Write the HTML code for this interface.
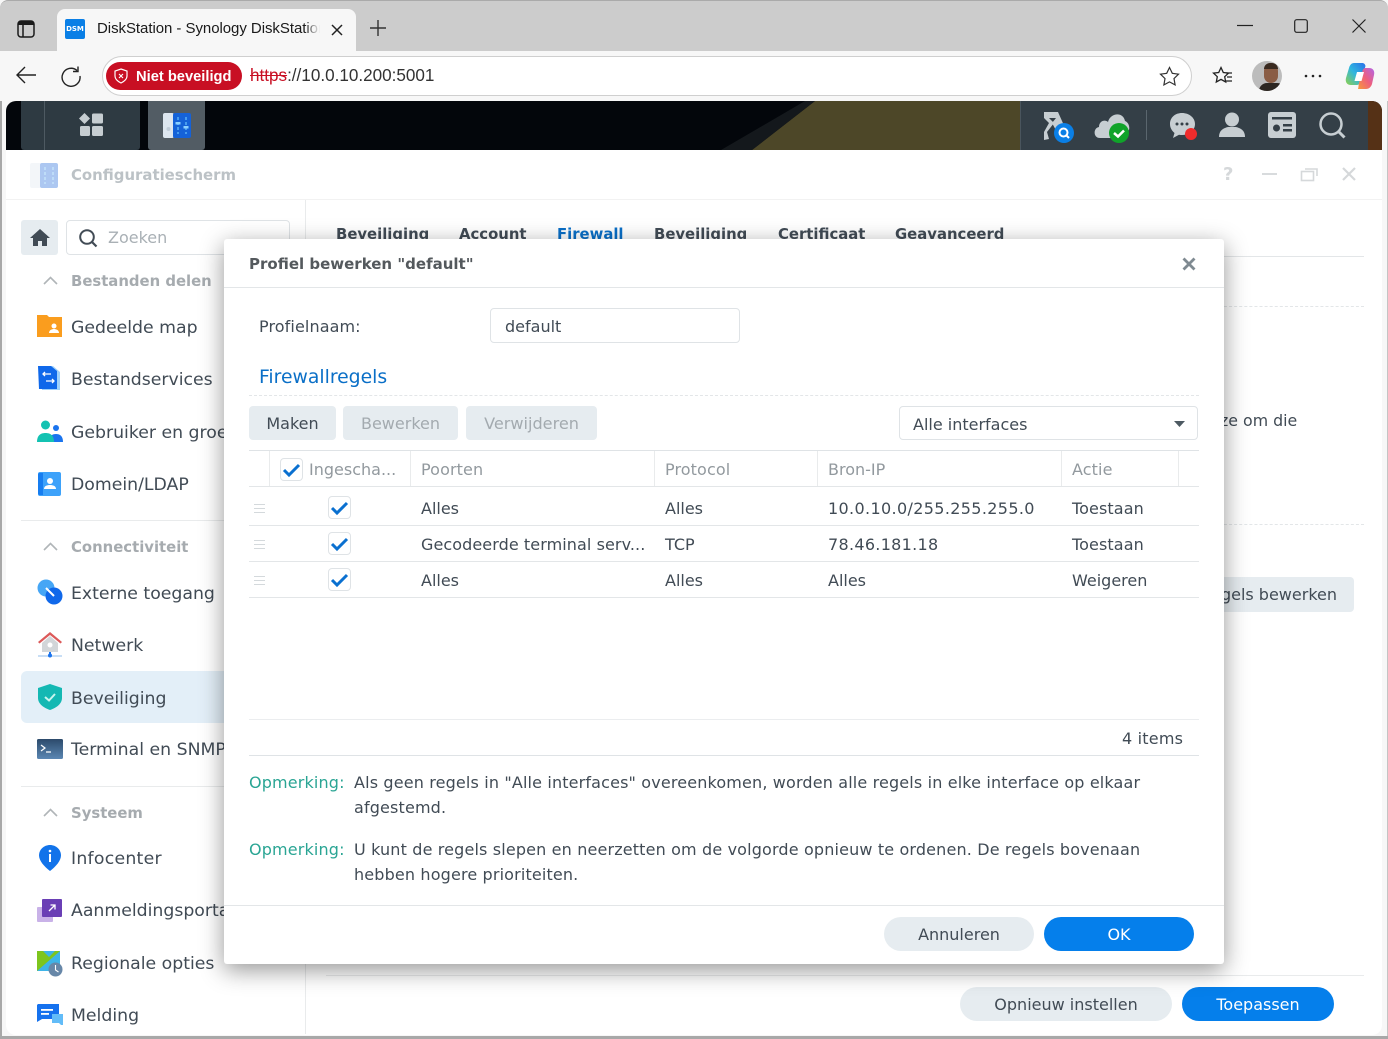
<!DOCTYPE html>
<html><head><meta charset="utf-8">
<style>
html,body{margin:0;padding:0;width:1388px;height:1039px;overflow:hidden;background:#f7f7f7}
*{box-sizing:border-box}
body{position:relative;font-family:"DejaVu Sans","Liberation Sans",sans-serif;color:#414b55}
.a{position:absolute}
.t{position:absolute;white-space:nowrap;font-size:16px;line-height:20px}
.b{font-weight:bold}
.s{font-size:17.3px;margin-top:1px}
.h{font-size:14.85px}
.n{letter-spacing:.15px}
svg{position:absolute;overflow:visible}
.ln{position:absolute;height:1px;background:#e3e6e8}
.cb{position:absolute;width:23px;height:23px;border:1px solid #dfe3e6;border-radius:4px;background:#fff}
.btn{position:absolute;height:34px;border-radius:4px;background:#e6ecf0;text-align:center;line-height:36px;font-size:16px;white-space:nowrap}
.pill{position:absolute;height:34px;border-radius:17px;text-align:center;line-height:36px;font-size:16px;background:#e6ecf0;color:#414b55;white-space:nowrap}
.blue{background:#057feb;color:#fff}
</style></head><body>

<!-- browser frame -->
<div class="a" style="left:0;top:0;width:1388px;height:51px;background:#ccc;border-radius:8px 8px 0 0;border-top:1px solid #aaa"></div>
<div class="a" style="left:57px;top:9px;width:299px;height:43px;background:#f7f7f7;border-radius:8px 8px 0 0"></div>
<svg style="left:17px;top:20px" width="18" height="18"><rect x="1" y="1" width="16" height="16" rx="3" fill="none" stroke="#1a1a1a" stroke-width="1.5"/><path d="M6 4v13" stroke="#1a1a1a" stroke-width="1.5" fill="none"/><path d="M1 4a3 3 0 0 1 3-3h10a3 3 0 0 1 3 3v1H1z" fill="#1a1a1a"/></svg>
<div class="a" style="left:65px;top:19px;width:20px;height:20px;background:#0a7fe6;border-radius:2px;color:#fff;font:bold 7px/20px 'DejaVu Sans';text-align:center">DSM</div>
<div class="t" style="left:97px;top:19px;width:223px;overflow:hidden;font-family:'Liberation Sans',sans-serif;font-size:15px;letter-spacing:-.05px;color:#1a1a1a;-webkit-mask-image:linear-gradient(90deg,#000 93%,transparent)">DiskStation - Synology DiskStation</div>
<svg style="left:331px;top:24px" width="12" height="12"><path d="M1 1l10 10M11 1L1 11" stroke="#222" stroke-width="1.5"/></svg>
<svg style="left:369px;top:19px" width="18" height="18"><path d="M9 1v16M1 9h16" stroke="#333" stroke-width="1.4"/></svg>
<svg style="left:1237px;top:20px" width="17" height="12"><path d="M0 5.500h16" stroke="#222" stroke-width="1.200"/></svg>
<svg style="left:1294px;top:19px" width="14" height="14"><rect x=".7" y=".7" width="12.600" height="12.600" rx="2" fill="none" stroke="#222" stroke-width="1.200"/></svg>
<svg style="left:1352px;top:19px" width="14" height="14"><path d="M.5.5l13 13M13.500.5l-13 13" stroke="#222" stroke-width="1.200"/></svg>

<!-- toolbar -->
<div class="a" style="left:0;top:51px;width:1388px;height:50px;background:#f7f7f7"></div>
<svg style="left:16px;top:66px" width="20" height="18"><path d="M1 9h19M9 1L1 9l8 8" fill="none" stroke="#222" stroke-width="1.400"/></svg>
<svg style="left:61px;top:66px" width="20" height="20"><path d="M16 4.500A9 9 0 1 0 19 10M17 .5v5h-5" fill="none" stroke="#222" stroke-width="1.400"/></svg>
<div class="a" style="left:102px;top:56px;width:1090px;height:40px;background:#fff;border:1px solid #cfcfcf;border-radius:20px"></div>
<div class="a" style="left:106px;top:62px;width:136px;height:28px;background:#c80f23;border-radius:14px"></div>
<svg style="left:114px;top:68px" width="14" height="16"><path d="M7 1l6 2v5c0 3.500-3 5.500-6 7-3-1.500-6-3.500-6-7V3z" fill="none" stroke="#fff" stroke-width="1.200"/><path d="M5 6l4 4M9 6l-4 4" stroke="#fff" stroke-width="1.100"/></svg>
<div class="t b" style="left:136px;top:67px;font-family:'Liberation Sans',sans-serif;font-size:14.700px;color:#fff">Niet beveiligd</div>
<div class="t" style="left:250px;top:66px;font-family:'Liberation Sans',sans-serif;font-size:17.100px;color:#333"><span style="color:#c80f23;text-decoration:line-through">https</span>://10.0.10.200:5001</div>
<svg style="left:1159px;top:66px" width="21" height="20"><path d="M10.500 1.500l2.800 5.800 6.200.9-4.500 4.400 1.100 6.300-5.600-3-5.600 3 1.100-6.300L1.500 8.200l6.200-.9z" fill="none" stroke="#333" stroke-width="1.200"/></svg>
<svg style="left:1212px;top:66px" width="21" height="20"><path d="M9 1.500l2.300 5 5.200.6-3.800 3.600 1 5.300L9 13.400l-4.700 2.600 1-5.300L1.500 7.100l5.200-.6z" fill="none" stroke="#222" stroke-width="1.300"/><path d="M14 7h6M15 11h5M13 15h7" stroke="#222" stroke-width="1.200"/></svg>
<div class="a" style="left:1252px;top:61px;width:30px;height:30px;border-radius:50%;overflow:hidden;background:#bcbcbc"><div class="a" style="left:12px;top:3px;width:14px;height:19px;border-radius:7px;background:#8a5d45"></div><div class="a" style="left:12px;top:2px;width:14px;height:6px;border-radius:7px 7px 0 0;background:#3a2a20"></div><div class="a" style="left:7px;top:22px;width:26px;height:12px;border-radius:8px 8px 0 0;background:#2d2722"></div></div>
<svg style="left:1304px;top:74px" width="18" height="4"><circle cx="2" cy="2" r="1.300" fill="#222"/><circle cx="9" cy="2" r="1.300" fill="#222"/><circle cx="16" cy="2" r="1.300" fill="#222"/></svg>
<svg style="left:1345px;top:62px" width="30" height="28"><defs><linearGradient id="c1" x1="0" y1="1" x2="1" y2="0"><stop offset="0" stop-color="#8fd14a"/><stop offset=".5" stop-color="#2fb6e0"/><stop offset="1" stop-color="#2a6fe8"/></linearGradient><linearGradient id="c2" x1="0" y1="1" x2="1" y2="0"><stop offset="0" stop-color="#f79a3a"/><stop offset=".5" stop-color="#ee5f7d"/><stop offset="1" stop-color="#b264e8"/></linearGradient></defs><path d="M9 1h8c2 0 3 1 3.500 3L16 19c-.5 2-2 4-4 4H6c-4 0-6-3-5-7L4 6c.8-3 2.500-5 5-5z" fill="url(#c1)"/><path d="M13 27h8c3 0 5-2 6-5l2-9c1-4-1-7-5-7h-3c-2 0-3 1-3.500 3L14 21c-.5 2-.5 5-1 6z" fill="url(#c2)"/><path d="M12 10h7l-2.500 9h-7z" fill="#fff"/></svg>

<!-- DSM bar -->
<div class="a" style="left:6px;top:101px;width:1376px;height:49px;background:#03060b;border-radius:10px 10px 0 0;overflow:hidden">
  <svg style="left:0;top:0" width="1376" height="49"><path d="M809 0L1014 0V49H746z" fill="#4d4728"/><path d="M746 49L809 0h-10L715 49z" fill="#14181c"/><rect x="1362" y="0" width="14" height="49" fill="#553116"/></svg>
  <div class="a" style="left:15px;top:0;width:119px;height:49px;background:#2e3a42;border-radius:0 0 3px 3px"></div>
  <div class="a" style="left:38px;top:0;width:1px;height:49px;background:#4e5a62"></div>
  <div class="a" style="left:142px;top:0;width:57px;height:49px;background:#525c64;border-radius:0 0 3px 3px"></div>
  <div class="a" style="left:1014px;top:0;width:348px;height:49px;background:#343f47;border-left:1px solid #4a555d"></div>
</div>
<svg style="left:78px;top:112px" width="26" height="26"><path d="M6.500 1l5.500 5.500L6.500 12 1 6.500z" fill="#c6cdd1"/><rect x="14" y="1.500" width="11" height="10" rx="1.500" fill="#c6cdd1"/><rect x="2" y="14" width="10" height="10" rx="1.500" fill="#c6cdd1"/><rect x="14" y="14" width="11" height="10" rx="1.500" fill="#c6cdd1"/></svg>
<svg style="left:163px;top:112px" width="29" height="26"><rect x="0" y="1" width="11" height="25" rx="2" fill="#dde6ef"/><rect x="10" y="1" width="18" height="25" rx="2" fill="#1562d8"/><path d="M15 5v17M23 5v17" stroke="#58b0f5" stroke-width="1.500" stroke-dasharray="3 2"/><rect x="12.500" y="10" width="5" height="2.500" fill="#8bd0ff"/><rect x="20.500" y="14" width="5" height="2.500" fill="#8bd0ff"/><circle cx="5.500" cy="17" r="2" fill="#c0ccd8"/></svg>
<!-- tray icons -->
<svg style="left:1041px;top:111px" width="34" height="32"><path d="M3 1h14l8 18-8 4-6-11 4-5H8l5 5-7 9 2 7-5 1V21l5-9-5-5z" fill="#c7ced2"/><circle cx="23" cy="22" r="10" fill="#0a7fe6"/><circle cx="22.500" cy="21.500" r="4" fill="none" stroke="#fff" stroke-width="2"/><path d="M25 24l3 3" stroke="#fff" stroke-width="2"/></svg>
<svg style="left:1094px;top:111px" width="36" height="32"><path d="M6 27c-7 0-7-10-1-11 0-6 6-8 9-5 2-9 15-11 17-1 3 1 5 5 4 9L24 27z" fill="#c7ced2"/><circle cx="25" cy="22" r="10" fill="#10a32a"/><path d="M20 22l4 3.500 6-6" fill="none" stroke="#fff" stroke-width="2.500"/></svg>
<div class="a" style="left:1146px;top:110px;width:1px;height:30px;background:#5a666e"></div>
<svg style="left:1169px;top:112px" width="30" height="28"><path d="M13 1c7 0 13 4.500 13 11s-6 11-13 11c-1 0-2 0-3-.3L4 26l1.500-5C3 19 1 16 1 12 1 5.500 6 1 13 1z" fill="#c7ced2"/><circle cx="8" cy="12" r="1.500" fill="#343f47"/><circle cx="13" cy="12" r="1.500" fill="#343f47"/><circle cx="18" cy="12" r="1.500" fill="#343f47"/><circle cx="22" cy="22" r="6" fill="#f02c2c"/></svg>
<svg style="left:1219px;top:112px" width="26" height="26"><circle cx="13" cy="7.500" r="7" fill="#c7ced2"/><path d="M0 25c0-7 5-9 9-10h8c4 1 9 3 9 10z" fill="#c7ced2"/></svg>
<svg style="left:1268px;top:112px" width="28" height="26"><rect x="0" y="0" width="28" height="26" rx="3" fill="#c7ced2"/><rect x="4" y="5" width="20" height="2.500" fill="#343f47"/><circle cx="8.500" cy="16" r="3.500" fill="#343f47"/><rect x="15" y="12" width="9" height="2.500" fill="#343f47"/><rect x="15" y="17" width="9" height="2.500" fill="#343f47"/></svg>
<svg style="left:1319px;top:112px" width="27" height="27"><circle cx="12" cy="12" r="10.500" fill="none" stroke="#c7ced2" stroke-width="2.500"/><path d="M19.500 19.500l6 6" stroke="#c7ced2" stroke-width="3"/></svg>

<!-- window -->
<div class="a" style="left:0;top:101px;width:1.500px;height:938px;background:#a8a8a8"></div>
<div class="a" style="left:1387px;top:101px;width:1px;height:938px;background:#c4c4c4"></div>
<div class="a" style="left:0;top:1036px;width:1388px;height:3px;background:#a8a8a8"></div>
<div class="a" style="left:6px;top:150px;width:1376px;height:885px;background:#fff;border-radius:0 0 10px 10px"></div>
<div class="a" style="left:6px;top:199px;width:1376px;height:1px;background:#f2f2f2"></div>
<div class="a" style="left:305px;top:200px;width:1px;height:834px;background:#e9ebec"></div>

<svg style="left:30px;top:162px;opacity:.35" width="29" height="26"><rect x="0" y="1" width="11" height="25" rx="2" fill="#dde6ef"/><rect x="10" y="1" width="18" height="25" rx="2" fill="#1562d8"/><path d="M15 5v17M23 5v17" stroke="#58b0f5" stroke-width="1.500" stroke-dasharray="3 2"/></svg>
<div class="t b" style="left:71px;top:165px;font-size:14.900px;color:#bcc2c6">Configuratiescherm</div>
<div class="t" style="left:1223px;top:165px;font-size:18px;color:#d5d8da;font-weight:bold">?</div>
<div class="a" style="left:1262px;top:173px;width:15px;height:2px;background:#d8dbdd"></div>
<svg style="left:1301px;top:168px" width="17" height="13"><rect x=".5" y="3.500" width="12" height="9" fill="none" stroke="#d5d8da" stroke-width="1.600"/><path d="M4 1h12v7" fill="none" stroke="#d5d8da" stroke-width="1.600"/></svg>
<svg style="left:1342px;top:167px" width="14" height="14"><path d="M1 1l12 12M13 1L1 13" stroke="#d5d8da" stroke-width="2.200"/></svg>

<!-- sidebar -->
<div class="a" style="left:21px;top:220px;width:37px;height:35px;background:#e6ecf0;border-radius:3px"></div>
<svg style="left:30px;top:229px" width="20" height="18"><path d="M10 0L0 9h3v8h5v-5h4v5h5V9h3z" fill="#414b55"/></svg>
<div class="a" style="left:66px;top:220px;width:224px;height:35px;border:1px solid #dfe3e6;border-radius:4px;background:#fff"></div>
<svg style="left:79px;top:229px" width="19" height="19"><circle cx="8" cy="8" r="6.800" fill="none" stroke="#414b55" stroke-width="2"/><path d="M13 13l4.500 4.500" stroke="#414b55" stroke-width="2.200"/></svg>
<div class="t" style="left:108px;top:228px;color:#a9b0b5">Zoeken</div>

<svg style="left:43px;top:276px" width="15" height="9"><path d="M1 8l6.500-6.500L14 8" fill="none" stroke="#b0b5b8" stroke-width="1.600"/></svg>
<div class="t b h" style="left:71px;top:271px;color:#a6abaf">Bestanden delen</div>
<div class="a" style="left:21px;top:520px;width:204px;height:1px;background:#e9ebec"></div>

<svg style="left:37px;top:314px" width="26" height="24"><path d="M0 1h10l2 2h13v20H0z" fill="#fa9d1e"/><circle cx="17" cy="12" r="2.500" fill="#fff"/><path d="M12 19c0-3 3-4 5-4s5 1 5 4z" fill="#fff"/></svg>
<div class="t s" style="left:71px;top:317px">Gedeelde map</div>
<svg style="left:38px;top:366px" width="24" height="25"><path d="M2 0h13l7 6v18H4z" fill="#5fb2f7" opacity=".6"/><path d="M0 0h13l6 5v18H1z" fill="#0f68ea"/><path d="M5 8h8M7 6L5 8l2 2M8 15h8M14 13l2 2-2 2" stroke="#fff" stroke-width="1.300" fill="none"/></svg>
<div class="t s" style="left:71px;top:369px">Bestandservices</div>
<svg style="left:37px;top:420px" width="26" height="23"><circle cx="8.500" cy="5" r="4.500" fill="#14c2b2"/><circle cx="19" cy="8" r="3" fill="#1a74ee"/><path d="M12 22h14c0-6-3-8-7-8s-7 2-7 8z" fill="#1a74ee"/><path d="M0 22c0-7 4-9 8.500-9S17 15 17 22z" fill="#14c2b2"/></svg>
<div class="t s" style="left:71px;top:422px">Gebruiker en groep</div>
<svg style="left:38px;top:472px" width="23" height="24"><rect width="23" height="24" rx="2" fill="#3da2fa"/><path d="M0 3a2 2 0 0 1 2-2h3v22H2a2 2 0 0 1-2-2z" fill="#167df0"/><circle cx="12" cy="9" r="3" fill="#fff"/><path d="M6 17c0-3 3-4 6-4s6 1 6 4z" fill="#fff"/></svg>
<div class="t s" style="left:71px;top:474px">Domein/LDAP</div>

<svg style="left:43px;top:542px" width="15" height="9"><path d="M1 8l6.500-6.500L14 8" fill="none" stroke="#b0b5b8" stroke-width="1.600"/></svg>
<div class="t b h" style="left:71px;top:537px;color:#a6abaf">Connectiviteit</div>
<svg style="left:37px;top:579px" width="26" height="26"><circle cx="9" cy="9" r="8.500" fill="#46a6f5"/><circle cx="17" cy="17" r="8.500" fill="#1068ea"/><path d="M9 9l8 8" stroke="#fff" stroke-width="2"/></svg>
<div class="t s" style="left:71px;top:583px">Externe toegang</div>
<svg style="left:37px;top:631px" width="26" height="27"><path d="M13 1L1 11l1.500 1.500L13 4l10.500 8.500L25 11z" fill="#dc5a5a"/><path d="M5 12L13 5l8 7v9H5z" fill="#d2d6d9"/><circle cx="13" cy="14" r="2.500" fill="#fff"/><path d="M13 21v3" stroke="#1a74ee" stroke-width="2"/><path d="M1 25h24" stroke="#b5d3f2" stroke-width="1.500"/><circle cx="13" cy="24.500" r="2" fill="#1a74ee"/></svg>
<div class="t s" style="left:71px;top:635px">Netwerk</div>
<div class="a" style="left:21px;top:671px;width:204px;height:52px;background:#e3eff8;border-radius:6px 0 0 6px"></div>
<svg style="left:38px;top:684px" width="24" height="26"><path d="M12 0l12 4v10c0 6-6 10-12 12C6 24 0 20 0 14V4z" fill="#14b8b3"/><path d="M7 13l4 3.500 6-6.500" fill="none" stroke="#c9f5ee" stroke-width="2"/></svg>
<div class="t s" style="left:71px;top:688px">Beveiliging</div>
<svg style="left:37px;top:739px" width="26" height="21"><defs><linearGradient id="tg" x1="0" y1="0" x2="0" y2="1"><stop offset="0" stop-color="#2c4a6b"/><stop offset="1" stop-color="#5b87b3"/></linearGradient></defs><rect width="26" height="20" rx="1.500" fill="url(#tg)"/><path d="M4 6l4 3-4 3M9 13h5" stroke="#fff" stroke-width="1.200" fill="none"/></svg>
<div class="t s" style="left:71px;top:739px">Terminal en SNMP</div>
<div class="a" style="left:21px;top:786px;width:204px;height:1px;background:#e9ebec"></div>

<svg style="left:43px;top:808px" width="15" height="9"><path d="M1 8l6.500-6.500L14 8" fill="none" stroke="#b0b5b8" stroke-width="1.600"/></svg>
<div class="t b h" style="left:71px;top:803px;color:#a6abaf">Systeem</div>
<svg style="left:39px;top:845px" width="22" height="26"><path d="M11 0c6 0 11 4.500 11 10.500 0 5-5 11-11 15.500C5 21.500 0 15.500 0 10.500 0 4.500 5 0 11 0z" fill="#1273ea"/><rect x="10" y="9" width="2" height="8" fill="#fff"/><circle cx="11" cy="6" r="1.300" fill="#fff"/></svg>
<div class="t s" style="left:71px;top:848px;letter-spacing:.25px">Infocenter</div>
<svg style="left:37px;top:899px" width="25" height="23"><rect x="0" y="8" width="16" height="15" rx="1" fill="#c9b2e8"/><rect x="5" y="0" width="20" height="18" rx="1" fill="#6a3fb5"/><path d="M12 12l6-6M13.500 6H18v4.500" stroke="#fff" stroke-width="1.300" fill="none"/></svg>
<div class="t s" style="left:71px;top:900px">Aanmeldingsportaal</div>
<svg style="left:37px;top:951px" width="27" height="26"><rect width="23" height="20" fill="#3eb4e8"/><path d="M0 0h6l6 6 6-6h5L0 20z" fill="#7dc51e"/><circle cx="18.500" cy="18.500" r="7" fill="#6787a8"/><path d="M18.500 14v5l3 2" stroke="#fff" stroke-width="1.100" fill="none"/></svg>
<div class="t s" style="left:71px;top:953px">Regionale opties</div>
<svg style="left:37px;top:1004px" width="26" height="22"><path d="M1 0h21v15H5l-5 3V1z" fill="#1672ee"/><rect x="4" y="5" width="12" height="1.800" fill="#fff"/><rect x="4" y="9" width="8" height="1.800" fill="#fff"/><path d="M15 10h11v11h-2l-2-2h-7z" fill="#62bcf8"/></svg>
<div class="t s" style="left:71px;top:1005px">Melding</div>

<!-- main behind -->
<div class="t b h" style="left:336px;top:224px">Beveiliging</div>
<div class="t b h" style="left:459px;top:224px">Account</div>
<div class="t b h" style="left:557px;top:224px;color:#0a6fc7">Firewall</div>
<div class="t b h" style="left:654px;top:224px">Beveiliging</div>
<div class="t b h" style="left:778px;top:224px">Certificaat</div>
<div class="t b h" style="left:895px;top:224px">Geavanceerd</div>
<div class="a" style="left:326px;top:256px;width:1038px;height:1px;background:#e3e6e8"></div>
<div class="a" style="left:1224px;top:306px;width:140px;border-top:1px dashed #e3e6e8"></div>
<div class="a" style="left:1224px;top:524px;width:140px;border-top:1px dashed #e3e6e8"></div>
<div class="t" style="left:1220px;top:411px;font-size:15.800px">ze om die</div>
<div class="a" style="left:1200px;top:577px;width:154px;height:35px;background:#e6ecf0;border-radius:4px"></div>
<div class="t" style="left:1224px;top:585px;width:113px;overflow:hidden;direction:rtl">Firewallregels bewerken</div>
<div class="a" style="left:326px;top:975px;width:1038px;height:1px;background:#e9ebec"></div>
<div class="pill" style="left:960px;top:987px;width:212px">Opnieuw instellen</div>
<div class="pill blue" style="left:1182px;top:987px;width:152px">Toepassen</div>

<!-- dialog -->
<div class="a" style="left:224px;top:239px;width:1000px;height:725px;background:#fff;border-radius:3px;box-shadow:0 6px 24px rgba(0,0,0,.42)"></div>
<div class="t b" style="left:249px;top:254px;font-size:15px;color:#54595d">Profiel bewerken "default"</div>
<svg style="left:1182px;top:257px" width="14" height="14"><path d="M1.500 1.500l11 11M12.500 1.500l-11 11" stroke="#7f8a91" stroke-width="2.800"/></svg>
<div class="ln" style="left:224px;top:287px;width:1000px"></div>

<div class="t" style="left:259px;top:317px;letter-spacing:.1px">Profielnaam:</div>
<div class="a" style="left:490px;top:308px;width:250px;height:35px;border:1px solid #dfe3e6;border-radius:4px;background:#fff"></div>
<div class="t" style="left:505px;top:317px">default</div>

<div class="t" style="left:259px;top:368px;font-size:18.800px;color:#0a6fc7;line-height:20px">Firewallregels</div>
<div class="a" style="left:249px;top:395px;width:950px;border-top:1px dashed #e3e6e8"></div>

<div class="btn" style="left:249px;top:406px;width:87px">Maken</div>
<div class="btn" style="left:343px;top:406px;width:115px;color:#a3aaaf">Bewerken</div>
<div class="btn" style="left:466px;top:406px;width:131px;color:#a3aaaf;font-size:16.100px">Verwijderen</div>
<div class="a" style="left:899px;top:406px;width:299px;height:34px;border:1px solid #dfe3e6;border-radius:4px;background:#fff"></div>
<div class="t" style="left:913px;top:415px">Alle interfaces</div>
<svg style="left:1174px;top:421px" width="11" height="6"><path d="M0 0h11L5.500 6z" fill="#4d5a62"/></svg>

<!-- table -->
<div class="a" style="left:249px;top:450px;width:950px;height:1px;background:#dfe3e6"></div>
<div class="ln" style="left:249px;top:486px;width:950px"></div>
<div class="ln" style="left:249px;top:525px;width:950px"></div>
<div class="ln" style="left:249px;top:561px;width:950px"></div>
<div class="ln" style="left:249px;top:597px;width:950px"></div>
<div class="a" style="left:269px;top:451px;width:1px;height:35px;background:#e9ebec"></div>
<div class="a" style="left:410px;top:451px;width:1px;height:35px;background:#e9ebec"></div>
<div class="a" style="left:654px;top:451px;width:1px;height:35px;background:#e9ebec"></div>
<div class="a" style="left:817px;top:451px;width:1px;height:35px;background:#e9ebec"></div>
<div class="a" style="left:1061px;top:451px;width:1px;height:35px;background:#e9ebec"></div>
<div class="a" style="left:1178px;top:451px;width:1px;height:35px;background:#e9ebec"></div>

<div class="cb" style="left:280px;top:458px"></div>
<svg style="left:282px;top:462px" width="20" height="16"><path d="M2 8l5 5 10-10" fill="none" stroke="#0a70d0" stroke-width="3"/></svg>
<div class="t" style="left:309px;top:460px;color:#92999e">Ingescha...</div>
<div class="t" style="left:421px;top:460px;color:#92999e;letter-spacing:.1px">Poorten</div>
<div class="t" style="left:665px;top:460px;color:#92999e;letter-spacing:.1px">Protocol</div>
<div class="t" style="left:828px;top:460px;color:#92999e">Bron-IP</div>
<div class="t" style="left:1072px;top:460px;color:#92999e;letter-spacing:.1px">Actie</div>

<svg style="left:254px;top:504px" width="11" height="9"><path d="M0 .5h11M0 4.500h11M0 8.500h11" stroke="#d4d9dc"/></svg>
<div class="cb" style="left:328px;top:496px"></div>
<svg style="left:330px;top:500px" width="20" height="16"><path d="M2 8l5 5 10-10" fill="none" stroke="#0a70d0" stroke-width="3"/></svg>
<div class="t" style="left:421px;top:499px">Alles</div>
<div class="t" style="left:665px;top:499px">Alles</div>
<div class="t" style="left:828px;top:499px;letter-spacing:.35px">10.0.10.0/255.255.255.0</div>
<div class="t" style="left:1072px;top:499px;letter-spacing:.1px">Toestaan</div>

<svg style="left:254px;top:540px" width="11" height="9"><path d="M0 .5h11M0 4.500h11M0 8.500h11" stroke="#d4d9dc"/></svg>
<div class="cb" style="left:328px;top:532px"></div>
<svg style="left:330px;top:536px" width="20" height="16"><path d="M2 8l5 5 10-10" fill="none" stroke="#0a70d0" stroke-width="3"/></svg>
<div class="t" style="left:421px;top:535px;letter-spacing:.08px">Gecodeerde terminal serv...</div>
<div class="t" style="left:665px;top:535px">TCP</div>
<div class="t" style="left:828px;top:535px;letter-spacing:.3px">78.46.181.18</div>
<div class="t" style="left:1072px;top:535px;letter-spacing:.1px">Toestaan</div>

<svg style="left:254px;top:576px" width="11" height="9"><path d="M0 .5h11M0 4.500h11M0 8.500h11" stroke="#d4d9dc"/></svg>
<div class="cb" style="left:328px;top:568px"></div>
<svg style="left:330px;top:572px" width="20" height="16"><path d="M2 8l5 5 10-10" fill="none" stroke="#0a70d0" stroke-width="3"/></svg>
<div class="t" style="left:421px;top:571px">Alles</div>
<div class="t" style="left:665px;top:571px">Alles</div>
<div class="t" style="left:828px;top:571px">Alles</div>
<div class="t" style="left:1072px;top:571px">Weigeren</div>

<div class="ln" style="left:249px;top:719px;width:950px;background:#ebedef"></div>
<div class="t" style="left:1122px;top:729px;letter-spacing:.2px">4 items</div>
<div class="a" style="left:249px;top:755px;width:950px;height:1px;background:#dfe3e6"></div>

<div class="t n" style="left:249px;top:773px;color:#2aa594">Opmerking:</div>
<div class="t n" style="left:354px;top:773px">Als geen regels in "Alle interfaces" overeenkomen, worden alle regels in elke interface op elkaar</div>
<div class="t n" style="left:354px;top:798px">afgestemd.</div>
<div class="t n" style="left:249px;top:840px;color:#2aa594">Opmerking:</div>
<div class="t n" style="left:354px;top:840px">U kunt de regels slepen en neerzetten om de volgorde opnieuw te ordenen. De regels bovenaan</div>
<div class="t n" style="left:354px;top:865px">hebben hogere prioriteiten.</div>

<div class="ln" style="left:224px;top:905px;width:1000px"></div>
<div class="pill" style="left:884px;top:917px;width:150px">Annuleren</div>
<div class="pill blue" style="left:1044px;top:917px;width:150px">OK</div>

</body></html>
